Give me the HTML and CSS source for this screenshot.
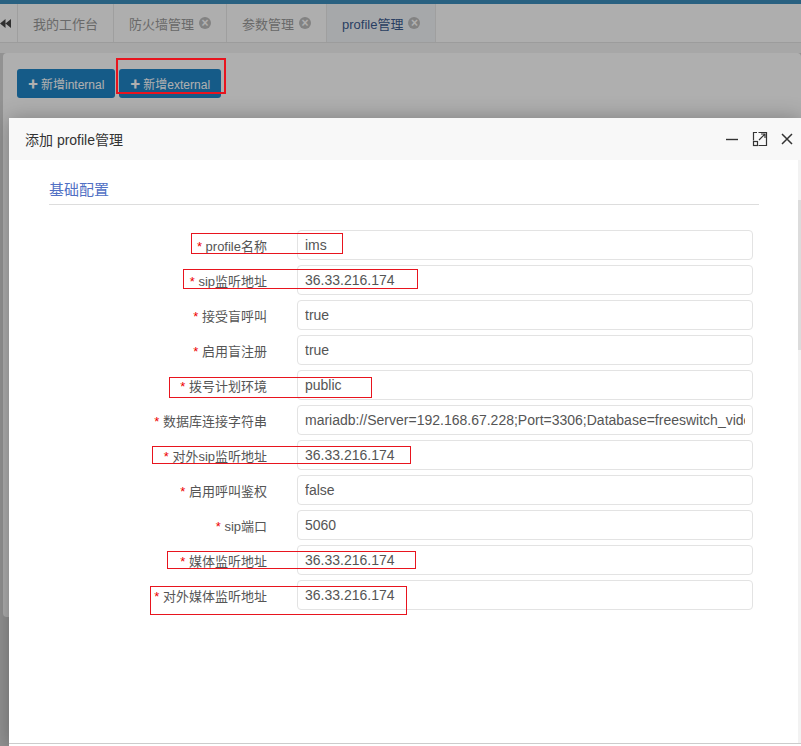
FILE: index.html
```html
<!DOCTYPE html>
<html>
    <head>
        <meta charset="utf-8">
        <title>profile管理</title>
        <link rel="stylesheet" href="styles.css">
    </head>
    <body>
        <div class="topbar"></div>

        <div class="tabs">
            <span class="tab-nav">
                <svg width="11" height="11" viewBox="0 0 11 11"><path d="M5.5 1 L0 5.5 L5.5 10 Z M11 1 L5.5 5.5 L11 10 Z" fill="#444"/></svg>
            </span>
            <div class="tab">我的工作台</div>
            <div class="tab">防火墙管理<i class="tab-close">×</i></div>
            <div class="tab">参数管理<i class="tab-close">×</i></div>
            <div class="tab active">profile管理<i class="tab-close">×</i></div>
        </div>
        <div class="strip"></div>

        <div class="content">
            <div class="panel">
                <button class="btn"><span class="plus">✚</span>新增internal</button>
                <button class="btn"><span class="plus">✚</span>新增external</button>
            </div>
        </div>

        <div class="mask"></div>

        <div class="dialog">
            <div class="dialog-head">
                <span class="dialog-title">添加 profile管理</span>
                <div class="dialog-tools">
                    <svg width="14" height="14" viewBox="0 0 14 14"><path d="M1 7.5 H13" stroke="#333" stroke-width="1.4"/></svg>
                    <svg width="16" height="16" viewBox="0 0 16 16">
                        <path d="M6.5 1.5 H14.5 V14.5 H6.5 M1.5 9.5 V1.5 H5" fill="none" stroke="#333" stroke-width="1.2"/>
                        <rect x="1.5" y="10.5" width="4" height="4" fill="none" stroke="#333" stroke-width="1.2"/>
                        <path d="M7 9 L13 3 M9 3 H13 V7" fill="none" stroke="#333" stroke-width="1.2"/>
                    </svg>
                    <svg width="12" height="12" viewBox="0 0 12 12"><path d="M1 1 L11 11 M11 1 L1 11" stroke="#333" stroke-width="1.5"/></svg>
                </div>
            </div>
            <div class="dialog-body">
                <h4 class="section">基础配置</h4>
                <form class="form">
                    <label><em>*</em> profile名称</label>
                    <input type="text" value="ims">

                    <label><em>*</em> sip监听地址</label>
                    <input type="text" value="36.33.216.174">

                    <label><em>*</em> 接受盲呼叫</label>
                    <input type="text" value="true">

                    <label><em>*</em> 启用盲注册</label>
                    <input type="text" value="true">

                    <label><em>*</em> 拨号计划环境</label>
                    <input type="text" value="public">

                    <label><em>*</em> 数据库连接字符串</label>
                    <input type="text" value="mariadb://Server=192.168.67.228;Port=3306;Database=freeswitch_video">

                    <label><em>*</em> 对外sip监听地址</label>
                    <input type="text" value="36.33.216.174">

                    <label><em>*</em> 启用呼叫鉴权</label>
                    <input type="text" value="false">

                    <label><em>*</em> sip端口</label>
                    <input type="text" value="5060">

                    <label><em>*</em> 媒体监听地址</label>
                    <input type="text" value="36.33.216.174">

                    <label><em>*</em> 对外媒体监听地址</label>
                    <input type="text" value="36.33.216.174">
                </form>
            </div>
            <div class="dialog-foot"></div>
        </div>

        <!-- red review marks -->
        <span class="mark mark-btn"></span>
        <span class="mark mark-name"></span>
        <span class="mark mark-sip"></span>
        <span class="mark mark-plan"></span>
        <span class="mark mark-extsip"></span>
        <span class="mark mark-media"></span>
        <span class="mark mark-extmedia"></span>
    </body>
</html>
```

FILE: styles.css
```css
html, body {
  height: 100%;
  overflow: hidden;
}

body {
  margin: 0;
  padding: 0;
  font-family: "Liberation Sans", "Noto Sans CJK SC", sans-serif;
  background: #d4d4d4;
  position: relative;
}

.topbar {
  height: 4px;
  background: #3c8dbc;
}

.tabs {
  display: flex;
  height: 38px;
  background: #fcfcfc;
  border-bottom: 1px solid #e2e2e2;
}

.tab-nav {
  width: 18px;
  display: flex;
  align-items: center;
  border-right: 1px solid #e6e6e6;
  box-sizing: border-box;
}

.tab {
  display: flex;
  align-items: center;
  padding: 0 15px;
  font-size: 13px;
  color: #999;
  border-right: 1px solid #e6e6e6;
}

.tab.active {
  background: #f1f3f7;
  color: #3b5b8f;
}

.tab-close {
  width: 12px;
  height: 12px;
  margin-left: 5px;
  border-radius: 50%;
  background: #bdbdbd;
  color: #fff;
  font-style: normal;
  font-size: 12px;
  line-height: 12px;
  text-align: center;
  font-weight: bold;
}

.strip {
  height: 10px;
  background: #f2f2f2;
}

.content {
  padding-left: 3px;
}

.panel {
  background: #fefefe;
  height: 532px;
  border-radius: 4px;
  padding: 16px 14px;
  display: flex;
  gap: 4px;
  align-items: flex-start;
}

.btn {
  height: 29px;
  padding: 0 11px;
  border: none;
  border-radius: 3px;
  background: #1f84c6;
  color: #fff;
  font-family: "Liberation Sans", "Noto Sans CJK SC", sans-serif;
  font-size: 12px;
  display: flex;
  align-items: center;
}

.plus {
  font-size: 10px;
  margin-right: 3px;
}

.mask {
  position: absolute;
  inset: 0;
  background: rgba(0, 0, 0, 0.31);
}

.dialog {
  position: absolute;
  left: 9px;
  top: 118px;
  right: 0;
  bottom: 0;
  background: #fff;
  box-shadow: 0 1px 20px rgba(0, 0, 0, 0.3);
  display: flex;
  flex-direction: column;
}

.dialog-head {
  height: 42px;
  flex: none;
  background: #f8f8f8;
  display: flex;
  align-items: center;
  justify-content: space-between;
  padding: 0 8px 0 16px;
}

.dialog-title {
  font-size: 14px;
  color: #333;
}

.dialog-tools {
  display: flex;
  align-items: center;
  gap: 13px;
}

.dialog-body {
  flex: 1;
  position: relative;
  padding: 20px 42px 0 40px;
  box-shadow: inset -3px 0 0 #f2f2f2;
}

/* thin scroll thumb on the right edge */
.dialog-body::after {
  content: "";
  position: absolute;
  right: 0;
  top: 40px;
  width: 3px;
  height: 150px;
  background: #dcdcdc;
}

.dialog-foot {
  height: 2px;
  flex: none;
  border-top: 1px solid #ccc;
}

.section {
  margin: 0;
  font-size: 15px;
  font-weight: normal;
  line-height: 20px;
  padding-bottom: 4px;
  color: #5170c4;
  border-bottom: 1px solid #ddd;
}

.form {
  margin-top: 25px;
  display: grid;
  grid-template-columns: 218px 456px;
  column-gap: 30px;
  row-gap: 5px;
  align-items: center;
}

.form label {
  text-align: right;
  font-size: 13px;
  color: #555;
}

.form label em {
  font-style: normal;
  color: #e00;
}

.form input {
  height: 30px;
  box-sizing: border-box;
  border: 1px solid #e3e3e3;
  border-radius: 4px;
  padding: 0 7px;
  font-family: "Liberation Sans", "Noto Sans CJK SC", sans-serif;
  font-size: 14px;
  color: #555;
}

.mark {
  position: absolute;
  border: 1.5px solid #e8141e;
  box-sizing: border-box;
}

.mark-btn { left: 116px; top: 58px; width: 110px; height: 36px; border-width: 2px; }
.mark-name { left: 191px; top: 233px; width: 152px; height: 21px; }
.mark-sip { left: 183px; top: 269px; width: 235px; height: 20px; }
.mark-plan { left: 169px; top: 377px; width: 203px; height: 21px; }
.mark-extsip { left: 152px; top: 446px; width: 259px; height: 18px; }
.mark-media { left: 167px; top: 551px; width: 249px; height: 18px; }
.mark-extmedia { left: 150px; top: 586px; width: 257px; height: 29px; }
```
